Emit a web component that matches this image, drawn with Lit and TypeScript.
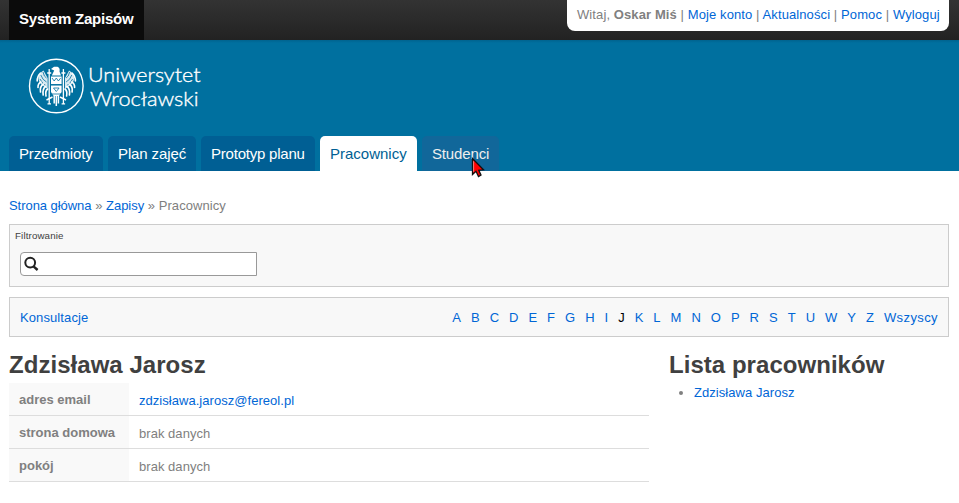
import { LitElement, html, css, svg } from "lit";
import { customElement } from "lit/decorators.js";
import { classMap } from "lit/directives/class-map.js";
import { styleMap } from "lit/directives/style-map.js";

@customElement("uni-logo")
class UniLogo extends LitElement {
  static styles = css`
    :host { display: block; height: 56px; }
    svg { display: block; }
    text { font-family: Lato, sans-serif; font-weight: 300; font-size: 20px; fill: #fff; stroke: #fff; stroke-width: 0.35px; }
  `;
  render() {
    const wing = svg`
      <path d="M19.6 20 L15.5 12.5 Q11 15 10.5 20 Q10.5 24 14 27 L19.6 31Z" fill="#fff" opacity=".85"/>
      <path d="M18.5 20 Q16 19 15 14 M18.5 24 Q14.5 22 12.8 17 M18.5 28 Q15 27 12 21" fill="none" stroke="#00709f" stroke-width=".8"/>
      <path d="M12.5 15 Q9.2 18 9.2 23 M13 24 Q9.8 25.5 10 29.5 M15.5 26 Q11.5 28.5 12.5 34 M18 28 Q14 31 15.2 37 M19.6 31 Q17 33 18 38" fill="none" stroke="#fff" stroke-width="1.6" stroke-linecap="round"/>
      <path d="M21.2 11 V46 M19.2 15 H23.2 M19.5 45.8 H23" stroke="#fff" stroke-width="1.3"/>`;
    return html`<svg width="176" height="56" viewBox="0 0 176 56">
      <circle cx="28.3" cy="28" r="26.8" fill="none" stroke="#fff" stroke-width="1.4" />
      ${wing}
      <g transform="translate(56.6 0) scale(-1 1)">${wing}</g>
      <path d="M23 11 L26 8.8 H29.5 Q32.3 10 31.5 13.5 L33 17.5 H23.8 L26.2 12.4Z" fill="#fff" />
      <path d="M23 18.5 H33.6 V34 L31 38 H25.6 L23 34Z" fill="#fff" />
      <path d="M22.5 26.8 H34" stroke="#00709f" stroke-width="1.5" />
      <path d="M24 20 l2.2 3 2.1-3 2.1 3 2.2-3 M25.5 30 h5.6 l-2.8 3.5z M24 36 h9" fill="none" stroke="#00709f" stroke-width=".8" />
      <path d="M28.3 37 V48 M26.2 38 V45.5 M30.4 38 V45.5 M18.5 42 L24.5 39 M38 42 L32 39" stroke="#fff" stroke-width="1.5" />
      <text x="60" y="23.5" textLength="112.5" lengthAdjust="spacingAndGlyphs">Uniwersytet</text>
      <text x="62" y="47.5" textLength="108.5" lengthAdjust="spacingAndGlyphs">Wrocławski</text>
    </svg>`;
  }
}

interface Tab { label: string; width: number; spacing: number; }

@customElement("app-root")
class AppRoot extends LitElement {
  static styles = css`
    :host {
      display: block; position: relative; height: 503px; overflow: hidden; background: #fff;
      font: 13px/18px "Liberation Sans", Arial, sans-serif; color: #808080;
    }
    * { box-sizing: border-box; }
    a { color: #0066d6; text-decoration: none; }
    .top {
      height: 40px; padding: 0 10px 0 9px; display: flex; justify-content: space-between; align-items: flex-start;
      background: linear-gradient(#333, #222);
    }
    .brand { width: 135px; height: 40px; padding-left: 10px; background: #0b0b0b; color: #fff; font-weight: bold; font-size: 15px; line-height: 38px; letter-spacing: -0.22px; white-space: nowrap; }
    .user { width: 382px; height: 31px; padding-left: 10px; line-height: 30px; letter-spacing: 0.1px; background: #fff; border-radius: 0 0 8px 8px; white-space: nowrap; }
    .header { height: 131px; padding: 18px 9px 0; background: linear-gradient(#00638f, #00709f 3px); display: flex; flex-direction: column; justify-content: space-between; }
    uni-logo { margin-left: 19px; }
    .tabs { display: flex; gap: 5px; }
    .tab { height: 35px; padding-left: 10px; border-radius: 5px 5px 0 0; background: #005f94; color: #fff; font-size: 15px; line-height: 36px; white-space: nowrap; }
    .tab.active { background: #fff; color: #005f94; }
    .tab.hover { background: #11679a; color: #eee; }
    .page { padding: 25px 10px 0 9px; }
    .crumbs { height: 28px; line-height: 20px; letter-spacing: 0.06px; }
    .crumbs a { letter-spacing: -0.05px; }
    .panel { border: 1px solid #ccc; background: #f8f8f8; }
    .filter { height: 63px; padding: 5px 5px 0; color: #404040; font-size: 9.75px; line-height: 12px; letter-spacing: 0.13px; }
    .search { display: flex; align-items: center; width: 237px; height: 24px; margin: 10px 0 0 5px; padding-left: 3px; border: 1px solid #999; border-radius: 4px 0 0 4px; background: #fff; }
    .letters { height: 40px; margin-top: 10px; padding: 2px 10px 0; display: flex; justify-content: space-between; align-items: center; letter-spacing: 0.1px; }
    .az { display: flex; gap: 10px; letter-spacing: 0; }
    .az .on { color: #000; }
    .az a:last-child { letter-spacing: 0.4px; }
    .cols { display: flex; gap: 20px; margin-top: 14px; }
    .main { width: 640px; }
    h2 { margin: 0; height: 32px; font-size: 24px; line-height: 28px; letter-spacing: 0.04px; color: #404040; white-space: nowrap; }
    .row { display: flex; height: 33px; border-bottom: 1px solid #ddd; }
    .key { width: 120px; padding-left: 10px; background: #f9f9f9; font-weight: bold; line-height: 33px; }
    .val { padding-left: 10px; line-height: 35px; letter-spacing: 0.04px; }
    ul { margin: 0; padding-left: 25px; line-height: 20px; letter-spacing: 0.06px; }
    .cursor { position: absolute; left: 471px; top: 157px; }
  `;
  private tabs: Tab[] = [
    { label: "Przedmioty", width: 94, spacing: -0.15 },
    { label: "Plan zajęć", width: 88, spacing: -0.12 },
    { label: "Prototyp planu", width: 114, spacing: -0.22 },
    { label: "Pracownicy", width: 97, spacing: 0 },
    { label: "Studenci", width: 77, spacing: -0.15 },
  ];
  render() {
    const letters = [..."ABCDEFGHIJKLMNOPRSTUWYZ", "Wszyscy"];
    const link = (t: string) => html`<a>${t}</a>`;
    return html`
      <div class="top">
        <div class="brand">System Zapisów</div>
        <div class="user">Witaj, <b>Oskar Miś</b> | ${link("Moje konto")} | ${link("Aktualności")} | ${link("Pomoc")} | ${link("Wyloguj")}</div>
      </div>
      <div class="header">
        <uni-logo></uni-logo>
        <div class="tabs">${this.tabs.map((t) => html`<a
          class=${classMap({ tab: true, active: t.label === "Pracownicy", hover: t.label === "Studenci" })}
          style=${styleMap({ width: `${t.width}px`, letterSpacing: `${t.spacing}px` })}>${t.label}</a>`)}</div>
      </div>
      <div class="page">
        <div class="crumbs">${link("Strona główna")} » ${link("Zapisy")} » Pracownicy</div>
        <div class="panel filter">
          Filtrowanie
          <div class="search">
            <svg width="16" height="16" viewBox="0 0 16 16" fill="none" stroke="#222"><circle cx="6.2" cy="6.6" r="4.9" stroke-width="2" /><path d="M9.5 10.3 L13.6 14" stroke-width="2.4" /></svg>
          </div>
        </div>
        <div class="panel letters">
          ${link("Konsultacje")}
          <div class="az">${letters.map((l) => html`<a class=${classMap({ on: l === "J" })}>${l}</a>`)}</div>
        </div>
        <div class="cols">
          <div class="main">
            <h2>Zdzisława Jarosz</h2>
            <div class="row"><div class="key">adres email</div><div class="val">${link("zdzisława.jarosz@fereol.pl")}</div></div>
            <div class="row"><div class="key">strona domowa</div><div class="val">brak danych</div></div>
            <div class="row"><div class="key">pokój</div><div class="val">brak danych</div></div>
          </div>
          <div>
            <h2>Lista pracowników</h2>
            <ul><li>${link("Zdzisława Jarosz")}</li></ul>
          </div>
        </div>
      </div>
      <svg class="cursor" width="15" height="22" viewBox="0 0 15 22"><path d="M1.5 1.5 V17.5 L5 14.3 L7.5 19.5 L10 18 L7.8 13.2 L12.5 12.8 Z" fill="#f00" stroke="#111" stroke-width="1.3" /><path d="M2.6 4.2 V14.8" stroke="#fff" stroke-width=".5" /></svg>
    `;
  }
}
